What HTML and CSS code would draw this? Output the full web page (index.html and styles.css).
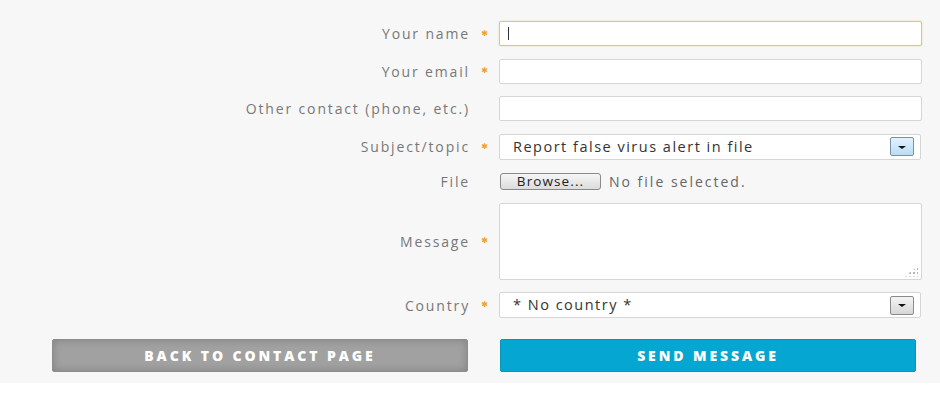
FILE: index.html
```html
<!DOCTYPE html>
<html lang="en">
<head>
<meta charset="utf-8">
<title>Contact form</title>
<link rel="stylesheet" href="styles.css">
</head>
<body>
<div class="page">
  <form class="form">
    <div class="row">
      <label class="lbl">Your name</label><span class="req">&#10033;</span>
      <div class="input focused"><span class="caret"></span></div>
    </div>
    <div class="row">
      <label class="lbl">Your email</label><span class="req">&#10033;</span>
      <div class="input"></div>
    </div>
    <div class="row">
      <label class="lbl">Other contact (phone, etc.)</label><span class="req"></span>
      <div class="input"></div>
    </div>
    <div class="row">
      <label class="lbl">Subject/topic</label><span class="req">&#10033;</span>
      <div class="select"><span class="sel-text">Report false virus alert in file</span><span class="dd dd-blue"><span class="arrow"></span></span></div>
    </div>
    <div class="row row-file">
      <label class="lbl">File</label><span class="req"></span>
      <div class="file"><span class="browse">Browse...</span><span class="nofile">No file selected.</span></div>
    </div>
    <div class="row row-msg">
      <label class="lbl">Message</label><span class="req">&#10033;</span>
      <div class="textarea"><span class="grip"></span></div>
    </div>
    <div class="row">
      <label class="lbl">Country</label><span class="req">&#10033;</span>
      <div class="select"><span class="sel-text">* No country *</span><span class="dd dd-gray"><span class="arrow"></span></span></div>
    </div>
  </form>
  <div class="actions">
    <a class="btn btn-back">BACK TO CONTACT PAGE</a>
    <a class="btn btn-send">SEND MESSAGE</a>
  </div>
</div>
</body>
</html>
```

FILE: styles.css
```css
html, body {
  margin: 0;
  padding: 0;
  background: #ffffff;
}
body {
  font-family: "Open Sans", "DejaVu Sans", sans-serif;
}
.page {
  background: #f7f7f7;
  padding: 21px 0 11px 0;
  width: 940px;
  box-sizing: border-box;
}
.form {
  display: flex;
  flex-direction: column;
  gap: 12.5px;
  margin: 0;
}
.row {
  display: grid;
  grid-template-columns: 470px 29px 423px;
  align-items: center;
}
.lbl {
  text-align: right;
  color: #777777;
  font-size: 14px;
  line-height: 17px;
  letter-spacing: 1.85px;
  white-space: nowrap;
}
.req {
  text-align: center;
  color: #f0a12b;
  font-size: 8px;
  line-height: 1;
  font-family: "DejaVu Sans", sans-serif;
}
.input {
  height: 25px;
  box-sizing: border-box;
  background: #ffffff;
  border: 1px solid #d6d6d6;
  border-radius: 2px;
  display: flex;
  align-items: center;
  padding-left: 8px;
}
.input.focused {
  border-color: #e3c46f;
  box-shadow: 0 0 2px rgba(227, 196, 111, 0.6);
}
.caret {
  display: block;
  width: 1px;
  height: 13px;
  background: #333333;
}
.select {
  width: 422px;
  height: 26px;
  box-sizing: border-box;
  background: #ffffff;
  border: 1px solid #d6d6d6;
  border-radius: 2px;
  display: flex;
  align-items: center;
  justify-content: space-between;
  padding: 0 6px 0 13px;
}
.sel-text {
  color: #333333;
  font-size: 14.5px;
  line-height: 18px;
  letter-spacing: 1.5px;
  white-space: nowrap;
}
.dd {
  width: 24px;
  height: 19px;
  box-sizing: border-box;
  border-radius: 2px;
  display: flex;
  align-items: center;
  justify-content: center;
}
.dd-blue {
  border: 1px solid #7c8fa4;
  background: linear-gradient(#e4f2fc, #b9dcf6);
}
.dd-gray {
  border: 1px solid #8a8a8a;
  background: linear-gradient(#f4f4f4, #d7d7d7);
}
.arrow {
  width: 0;
  height: 0;
  border-left: 4px solid transparent;
  border-right: 4px solid transparent;
  border-top: 3px solid #111111;
  margin-top: 1px;
}
.file {
  display: flex;
  align-items: center;
  height: 18px;
}
.browse {
  width: 101px;
  height: 17px;
  box-sizing: border-box;
  border: 1px solid #8a8a8a;
  border-radius: 3px;
  background: linear-gradient(#f6f6f6, #dcdcdc);
  color: #222222;
  font-size: 13.5px;
  letter-spacing: 1.1px;
  line-height: 15px;
  text-align: center;
  margin-left: 1px;
}
.nofile {
  margin-left: 8px;
  color: #666666;
  font-size: 14px;
  line-height: 17px;
  letter-spacing: 2px;
}
.textarea {
  height: 77px;
  box-sizing: border-box;
  background: #ffffff;
  border: 1px solid #d6d6d6;
  border-radius: 2px;
  display: flex;
  align-items: flex-end;
  justify-content: flex-end;
  padding: 0 3px 2px 0;
}
.grip {
  width: 14px;
  height: 10px;
  background:
    radial-gradient(circle, #b5b5b5 0.8px, transparent 1.2px) 0 0 / 4px 4px;
  clip-path: polygon(100% 0, 100% 100%, 0 100%);
}
.actions {
  display: grid;
  grid-template-columns: 416px 416px;
  column-gap: 32px;
  padding-left: 52px;
  margin-top: 21px;
}
.btn {
  height: 33px;
  box-sizing: border-box;
  border-radius: 2px;
  display: flex;
  align-items: center;
  justify-content: center;
  color: #ffffff;
  font-weight: 800;
  font-size: 14px;
  letter-spacing: 2.9px;
  text-decoration: none;
}
.btn-back {
  background: #a1a1a1;
  border: 1px solid #8d8d8d;
  box-shadow: inset 0 0 8px rgba(0, 0, 0, 0.2);
}
.btn-send {
  background: #05a6d2;
  border: 1px solid #0896bf;
}
```
